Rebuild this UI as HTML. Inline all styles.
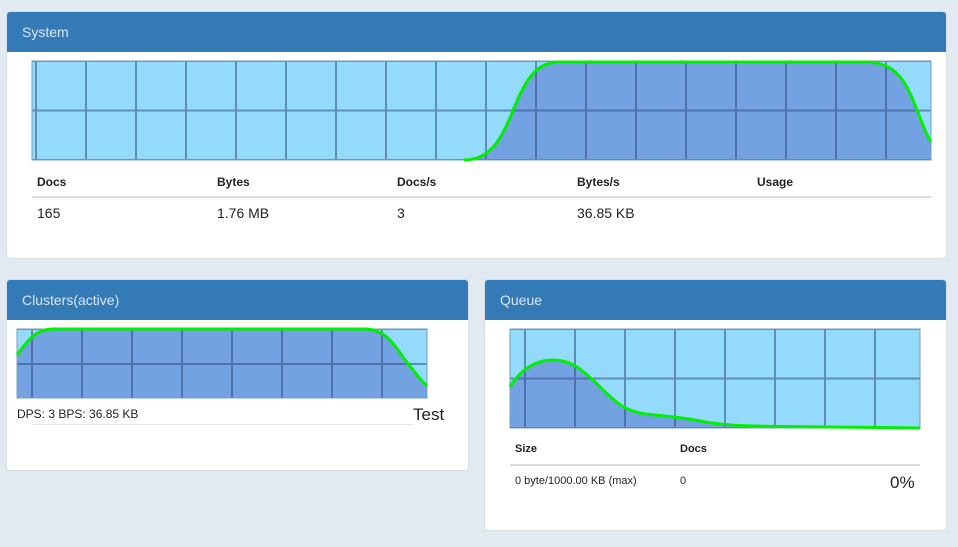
<!DOCTYPE html>
<html><head><meta charset="utf-8"><style>
body{margin:0;width:958px;height:547px;background:#e2eaf1;font-family:"Liberation Sans",sans-serif;color:#222;position:relative;overflow:hidden}
.p{position:absolute;background:#fff;border:1px solid #d6dde4;border-radius:4px;overflow:hidden}
.h{background:#337ab7;color:#d8e8f6;font-size:14px;height:40px;line-height:40px;padding-left:15px}
.t{position:absolute;font-size:13px}
.b{font-weight:bold;font-size:12px}
svg{position:absolute;left:0;top:0}
</style></head><body>
<div class="p" style="left:6px;top:11px;width:939px;height:246px"><div class="h">System</div></div>
<div class="p" style="left:6px;top:279px;width:461px;height:190px"><div class="h">Clusters(active)</div></div>
<div class="p" style="left:484px;top:279px;width:461px;height:250px"><div class="h">Queue</div></div>

<svg width="958" height="547">
<defs>
<pattern id="g1" x="35" y="60" width="50" height="49.5" patternUnits="userSpaceOnUse"><path d="M1,0V50M0,1H50" stroke="#2d4070" stroke-opacity=".5" stroke-width="2" fill="none"/></pattern>
<pattern id="g2" x="31" y="328" width="50" height="35" patternUnits="userSpaceOnUse"><path d="M1,0V50M0,1H50" stroke="#2d4070" stroke-opacity=".5" stroke-width="2" fill="none"/></pattern>
<pattern id="g3" x="524" y="328" width="50" height="49.5" patternUnits="userSpaceOnUse"><path d="M1,0V50M0,1H50" stroke="#2d4070" stroke-opacity=".5" stroke-width="2" fill="none"/></pattern>
</defs>
<rect x="32" y="61" width="899" height="99" fill="#93dafd"/>
<path d="M32,160 L464,160 C490,160 500,140 510,118 C525,80 535,62 560,62 L865,62 C895,62 905,80 915,105 C922,122 926,135 931,142 L931,160 Z" fill="#72a2e2"/>
<rect x="32" y="61" width="899" height="99" fill="url(#g1)" stroke="#7a9db5"/>
<path d="M464,160 C490,160 500,140 510,118 C525,80 535,62 560,62 L865,62 C895,62 905,80 915,105 C922,122 926,135 931,142" fill="none" stroke="#00f000" stroke-width="3"/>

<rect x="17" y="329" width="410" height="69" fill="#93dafd"/>
<path d="M17,355 C28,340 35,330 52,329 L365,329 C385,329 395,345 405,360 C415,372 420,380 427,386 L427,398 L17,398 Z" fill="#72a2e2"/>
<rect x="17" y="329" width="410" height="69" fill="url(#g2)" stroke="#7a9db5"/>
<path d="M17,355 C28,340 35,330 52,329 L365,329 C385,329 395,345 405,360 C415,372 420,380 427,386" fill="none" stroke="#00f000" stroke-width="3"/>

<rect x="510" y="329" width="410" height="99" fill="#93dafd"/>
<path d="M510,387 C520,370 535,360 553,360 C570,360 580,368 595,382 C612,398 620,410 645,414 C665,416 680,417 700,421 C720,425 740,426 780,426.5 L920,428 L510,428Z" fill="#72a2e2"/>
<rect x="510" y="329" width="410" height="99" fill="url(#g3)" stroke="#7a9db5"/>
<path d="M510,387 C520,370 535,360 553,360 C570,360 580,368 595,382 C612,398 620,410 645,414 C665,416 680,417 700,421 C720,425 740,426 780,426.5 L920,428" fill="none" stroke="#00f000" stroke-width="3"/>

<rect x="32" y="196" width="899" height="2" fill="#ddd"/>
<rect x="32" y="424" width="381" height="1" fill="#e6e6e6"/>
<rect x="510" y="464" width="410" height="2" fill="#ddd"/>
</svg>

<div class="t b" style="left:37px;top:175px">Docs</div>
<div class="t b" style="left:217px;top:175px">Bytes</div>
<div class="t b" style="left:397px;top:175px">Docs/s</div>
<div class="t b" style="left:577px;top:175px">Bytes/s</div>
<div class="t b" style="left:757px;top:175px">Usage</div>
<div class="t" style="left:37px;top:205px;font-size:14px">165</div>
<div class="t" style="left:217px;top:205px;font-size:14px">1.76 MB</div>
<div class="t" style="left:397px;top:205px;font-size:14px">3</div>
<div class="t" style="left:577px;top:205px;font-size:14px">36.85 KB</div>

<div class="t" style="left:17px;top:407px;font-size:12px">DPS: 3 BPS: 36.85 KB</div>
<div class="t" style="left:413px;top:405px;font-size:17px">Test</div>

<div class="t b" style="left:515px;top:443px;font-size:11px">Size</div>
<div class="t b" style="left:680px;top:443px;font-size:11px">Docs</div>
<div class="t" style="left:515px;top:475px;font-size:11px">0 byte/1000.00 KB (max)</div>
<div class="t" style="left:680px;top:475px;font-size:11px">0</div>
<div class="t" style="left:890px;top:473px;font-size:17px">0%</div>
</body></html>
